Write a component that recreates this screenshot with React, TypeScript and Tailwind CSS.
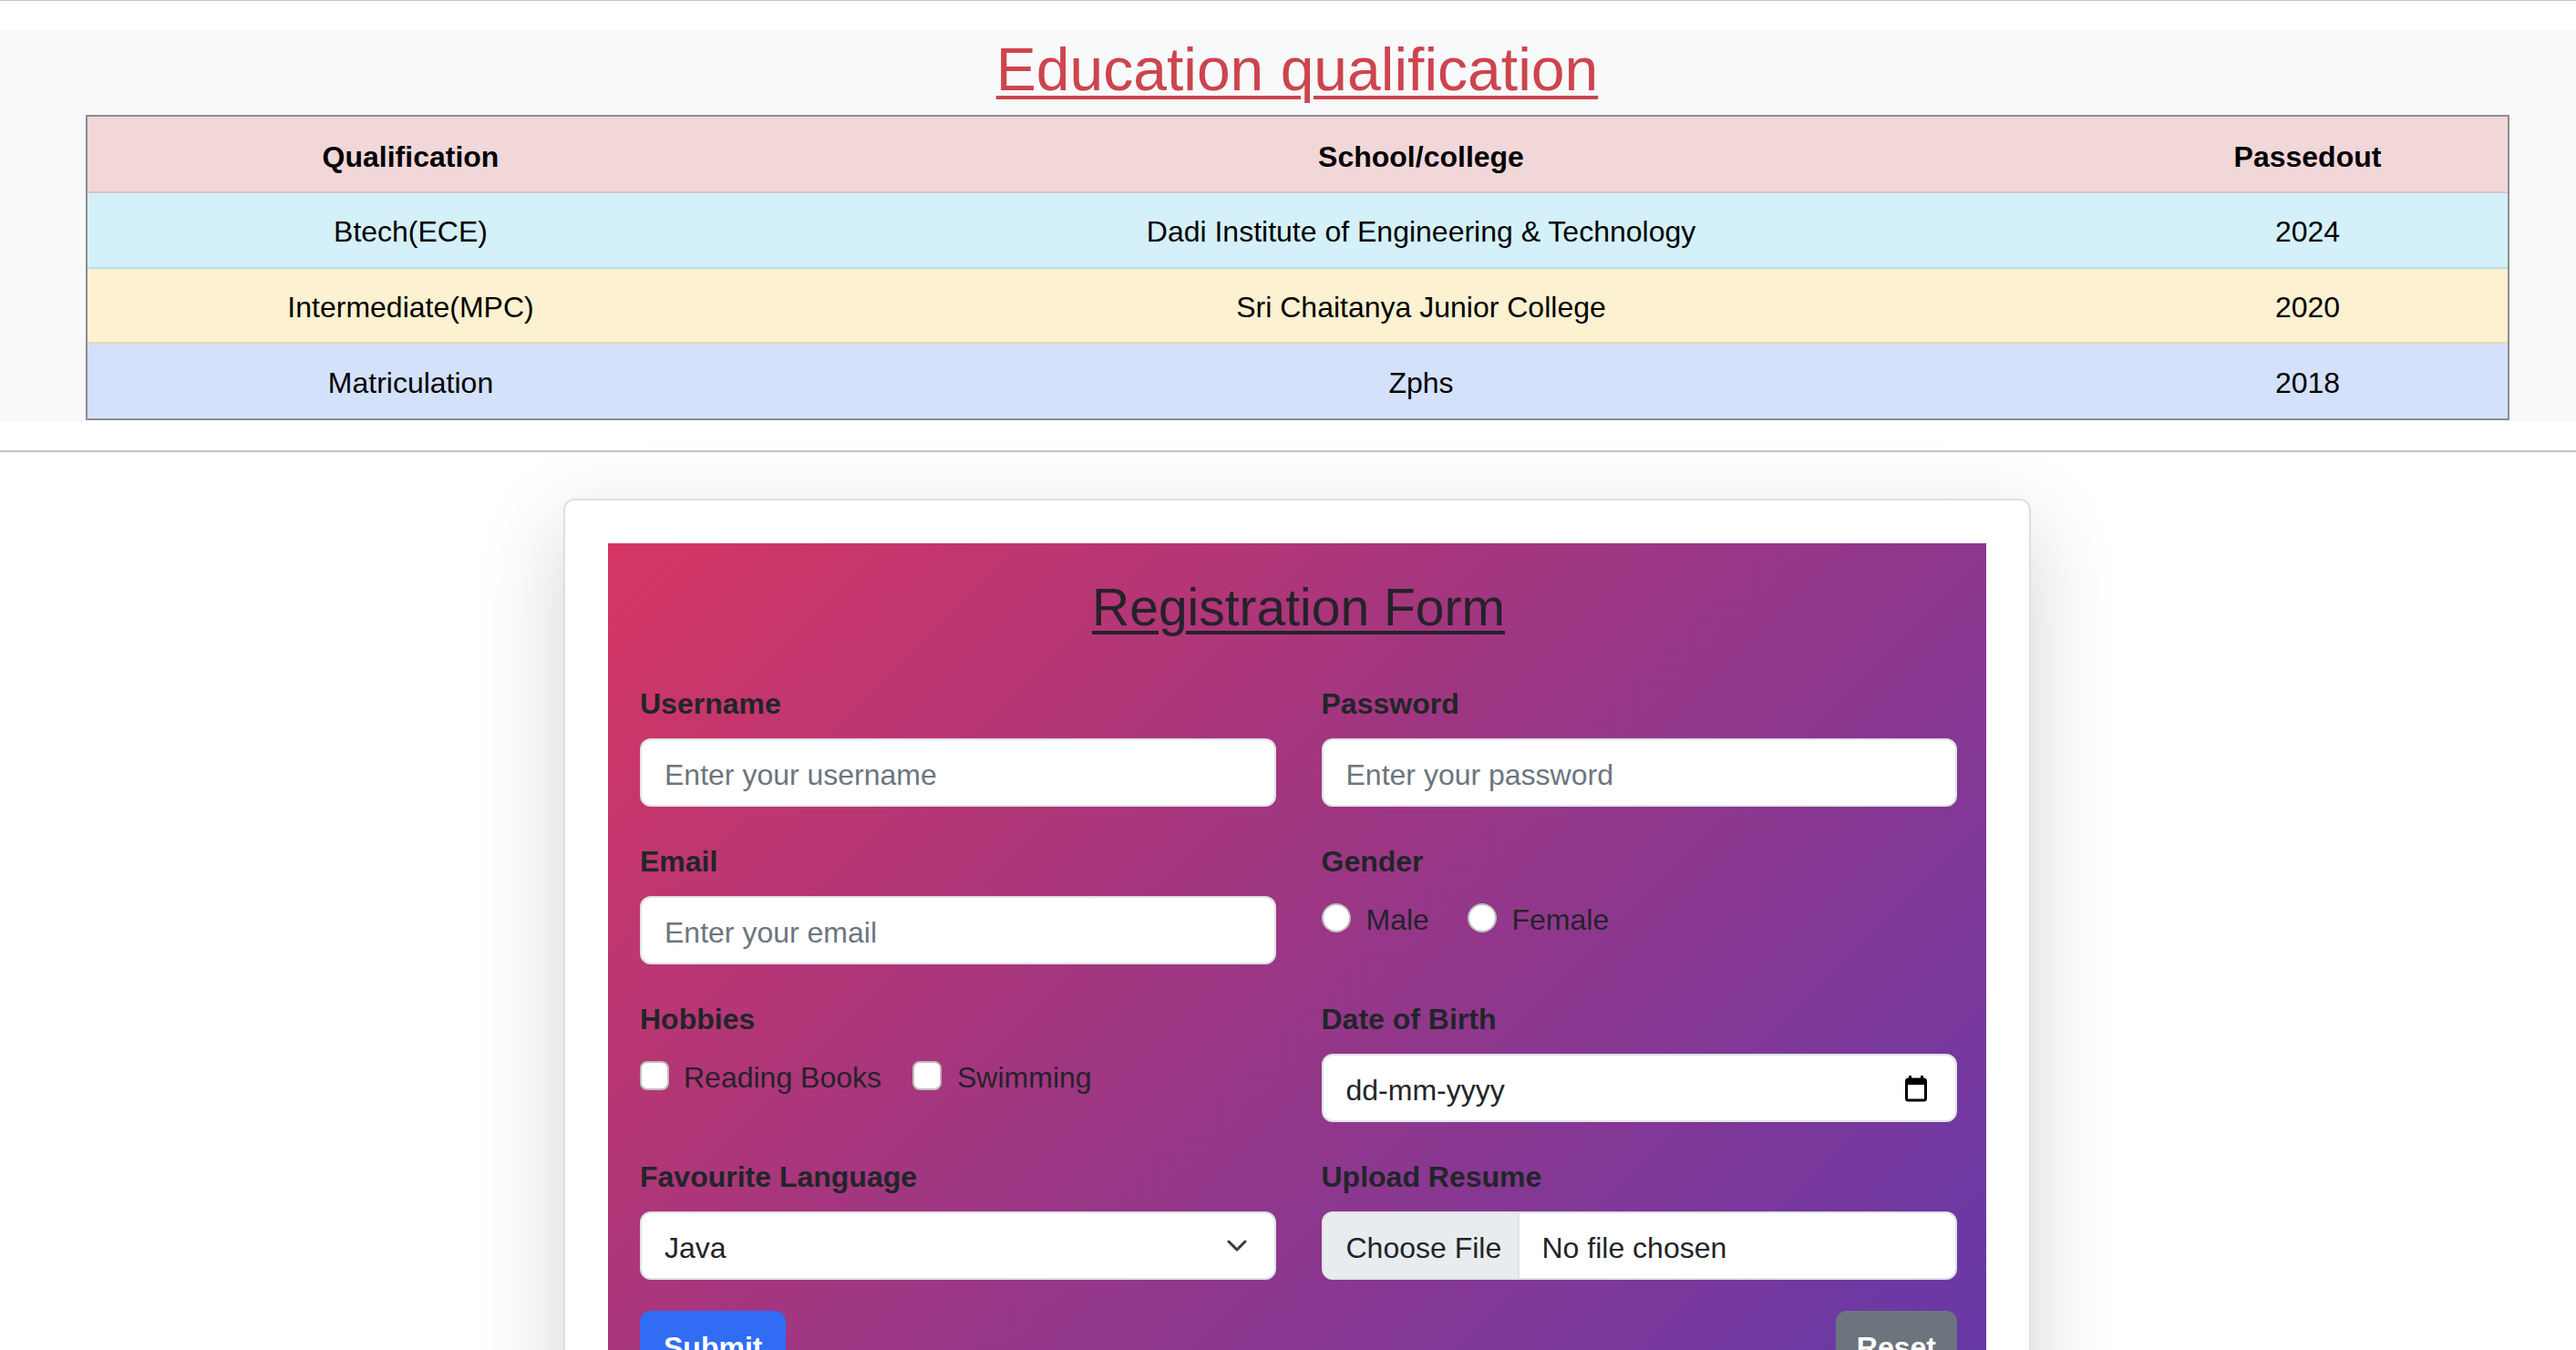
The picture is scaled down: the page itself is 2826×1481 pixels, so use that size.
const rows = [
  { q: "Btech(ECE)", s: "Dadi Institute of Engineering & Technology", y: "2024", cls: "h-[83px] bg-[#d4f1f9] border-b-2 border-[#bfdbe3]" },
  { q: "Intermediate(MPC)", s: "Sri Chaitanya Junior College", y: "2020", cls: "h-[82px] bg-[#fcf1d0] border-b-2 border-[#e6dbba]" },
  { q: "Matriculation", s: "Zphs", y: "2018", cls: "h-[82px] bg-[#d3e1fa]" },
];

function Label({ children }: { children: React.ReactNode }) {
  return <div className="mb-[14px] pt-[2px] text-[32px] font-bold leading-[48px] text-[#212529]">{children}</div>;
}

function TextField({ placeholder }: { placeholder: string }) {
  return (
    <input
      placeholder={placeholder}
      className="block h-[75px] w-full rounded-[12px] border-2 border-[#dee2e6] bg-white px-[25px] pt-[6px] text-[32px] text-[#212529] outline-none placeholder:text-[#6c757d]"
    />
  );
}

function CalendarIcon() {
  return (
    <svg width="26" height="30" viewBox="0 0 26 30" fill="none">
      <rect x="2.5" y="5" width="21" height="23" rx="2" stroke="#000" strokeWidth="3" />
      <rect x="2.5" y="5" width="21" height="6" fill="#000" />
      <rect x="5" y="1" width="3" height="5" fill="#000" />
      <rect x="18" y="1" width="3" height="5" fill="#000" />
    </svg>
  );
}

function Chevron() {
  return (
    <svg width="22" height="13" viewBox="0 0 22 13" fill="none">
      <path d="M2 2l9 9 9-9" stroke="#343a40" strokeWidth="3" strokeLinecap="round" strokeLinejoin="round" />
    </svg>
  );
}

export default function App() {
  return (
    <div className="min-h-screen bg-white font-['Liberation_Sans',Arial,sans-serif] text-[#212529]">
      <div className="h-px bg-[#c6c6c6]" />
      <div className="h-[32px]" />

      {/* Education table */}
      <section className="bg-[#f8f9fa] pl-[20px] pt-[4px] pb-[2px]">
        <h2 className="text-center text-[66px] leading-[79px] text-[#cd444e] underline decoration-[4px] underline-offset-[6px]">
          Education qualification
        </h2>
        <div className="mx-auto mt-[10px] w-[2659px] border-2 border-[#8e8e8e] text-[32px] text-black">
          <div className="grid h-[84px] grid-cols-[710px_1507px_438px] items-center border-b-2 border-[#dfc3c5] bg-[#f2d7d9] pt-[6px] text-center font-bold">
            <div>Qualification</div>
            <div>School/college</div>
            <div>Passedout</div>
          </div>
          {rows.map((r) => (
            <div key={r.q} className={`grid grid-cols-[710px_1507px_438px] items-center pt-[3px] text-center ${r.cls}`}>
              <div>{r.q}</div>
              <div>{r.s}</div>
              <div>{r.y}</div>
            </div>
          ))}
        </div>
      </section>

      <div className="mt-[31px] h-[2px] bg-[#c4c4c4]" />

      {/* Registration card */}
      <div className="pl-[20px] pt-[51px] pb-[80px]">
        <div className="mx-auto w-[1610px] rounded-[12px] border-2 border-[#dfdfdf] bg-white p-[47px] shadow-[0_32px_96px_rgba(0,0,0,0.175)]">
          <div className="bg-[linear-gradient(135deg,#d53663_0%,#a4367f_40%,#6439aa_100%)] pl-[35px] pr-[32px] pt-[36px] pb-[35px]">
            <h3 className="text-center text-[57px] leading-[68px] text-[#25222a] underline decoration-[4px] underline-offset-[6px]">
              Registration Form
            </h3>

            <div className="mt-[46px] grid grid-cols-2 gap-x-[50px] gap-y-[34px]">
              <div>
                <Label>Username</Label>
                <TextField placeholder="Enter your username" />
              </div>
              <div>
                <Label>Password</Label>
                <TextField placeholder="Enter your password" />
              </div>

              <div>
                <Label>Email</Label>
                <TextField placeholder="Enter your email" />
              </div>
              <div>
                <Label>Gender</Label>
                <div className="flex h-[48px] items-center text-[32px] text-[#25222a]">
                  <div className="flex w-[160px] items-center">
                    <span className="h-[32px] w-[32px] rounded-full border-2 border-[#bdbdbd] bg-white" />
                    <span className="ml-[17px] pt-[3px]">Male</span>
                  </div>
                  <div className="flex items-center">
                    <span className="h-[32px] w-[32px] rounded-full border-2 border-[#bdbdbd] bg-white" />
                    <span className="ml-[17px] pt-[3px]">Female</span>
                  </div>
                </div>
              </div>

              <div>
                <Label>Hobbies</Label>
                <div className="flex h-[48px] items-center text-[32px] text-[#25222a]">
                  <div className="flex w-[299px] items-center">
                    <span className="h-[32px] w-[32px] rounded-[8px] border-2 border-[#bdbdbd] bg-white" />
                    <span className="ml-[16px] pt-[3px]">Reading Books</span>
                  </div>
                  <div className="flex items-center">
                    <span className="h-[32px] w-[32px] rounded-[8px] border-2 border-[#bdbdbd] bg-white" />
                    <span className="ml-[17px] pt-[3px]">Swimming</span>
                  </div>
                </div>
              </div>
              <div>
                <Label>Date of Birth</Label>
                <div className="flex h-[75px] items-center justify-between rounded-[12px] border-2 border-[#dee2e6] bg-white pl-[25px] pr-[30px] text-[32px] text-[#212529]">
                  <span className="pt-[5px]">dd-mm-yyyy</span>
                  <CalendarIcon />
                </div>
              </div>

              <div>
                <Label>Favourite Language</Label>
                <div className="flex h-[75px] items-center justify-between rounded-[12px] border-2 border-[#dee2e6] bg-white pl-[25px] pr-[30px] text-[32px] text-[#212529]">
                  <span className="pt-[5px]">Java</span>
                  <Chevron />
                </div>
              </div>
              <div>
                <Label>Upload Resume</Label>
                <div className="flex h-[75px] overflow-hidden rounded-[12px] border-2 border-[#dee2e6] bg-white text-[32px] text-[#212529]">
                  <div className="flex w-[215px] items-center border-r-2 border-[#dee2e6] bg-[#e9ecef] pl-[25px] pt-[5px]">Choose File</div>
                  <div className="flex items-center pl-[25px] pt-[5px]">No file chosen</div>
                </div>
              </div>
            </div>

            <div className="mt-[34px] flex justify-between">
              <button className="h-[75px] rounded-[12px] bg-[#316cf4] px-[26px] pt-[4px] text-[32px] font-bold text-white">Submit</button>
              <button className="h-[75px] rounded-[12px] bg-[#6c757d] px-[23px] pt-[4px] text-[32px] font-bold text-white">Reset</button>
            </div>
          </div>
        </div>
      </div>
    </div>
  );
}
